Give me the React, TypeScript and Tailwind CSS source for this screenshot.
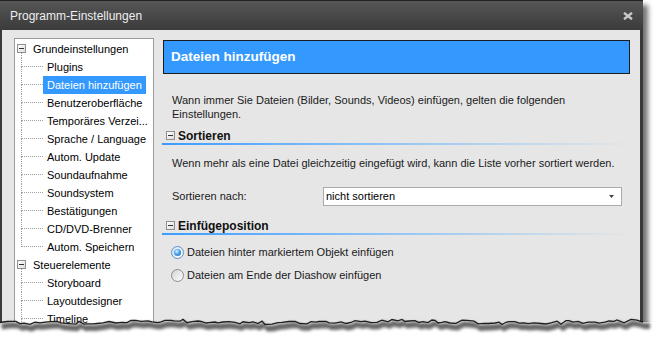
import React from 'react';

const groups = [
  {
    label: 'Grundeinstellungen',
    children: [
      'Plugins',
      'Dateien hinzufügen',
      'Benutzeroberfläche',
      'Temporäres Verzei...',
      'Sprache / Language',
      'Autom. Update',
      'Soundaufnahme',
      'Soundsystem',
      'Bestätigungen',
      'CD/DVD-Brenner',
      'Autom. Speichern',
    ],
    closed: true,
  },
  { label: 'Steuerelemente', children: ['Storyboard', 'Layoutdesigner', 'Timeline'], closed: false },
];

const Expander = () => (
  <span className="flex h-[9px] w-[9px] shrink-0 items-center justify-center border border-[#8e8f8f] bg-gradient-to-br from-white to-[#dcdcdc]">
    <span className="h-px w-[5px] bg-[#333]" />
  </span>
);

// fake paper tear along the bottom of the screenshot
const tear = (() => {
  let seed = 11;
  const rnd = () => {
    seed = (seed * 9301 + 49297) % 233280;
    return seed / 233280;
  };
  const pts: [number, number][] = [];
  let x = 0;
  while (x < 643) {
    const y = 12 + (rnd() - 0.5) * 3.6 + Math.sin(x / 37) * 1.1;
    pts.push([x, y]);
    x += 3 + Math.round(rnd() * 4);
  }
  pts.push([643, 12]);
  return pts;
})();

const tearLine = tear.map(([x, y]) => `${x},${y.toFixed(1)}`).join(' ');
const tearFill = `${tearLine} 660,12 660,40 0,40`;
const tearShadow =
  tear.map(([x, y]) => `${x + 1},${(y + 1).toFixed(1)}`).join(' ') +
  ' 650,13 650,19 ' +
  [...tear].reverse().map(([x, y]) => `${x + 2},${(y + 7).toFixed(1)}`).join(' ');

const Radio = ({ checked }: { checked?: boolean }) => (
  <svg width="13" height="13" viewBox="0 0 13 13" className="shrink-0">
    <defs>
      <linearGradient id={checked ? 'rb1' : 'rb0'} x1="0" y1="0" x2="1" y2="1">
        <stop offset="0" stopColor={checked ? '#cfe3f5' : '#d2d2d2'} />
        <stop offset="1" stopColor="#ffffff" />
      </linearGradient>
      <radialGradient id="rdot" cx="0.4" cy="0.35" r="0.75">
        <stop offset="0" stopColor="#e8f6ff" />
        <stop offset="0.45" stopColor="#58aef2" />
        <stop offset="1" stopColor="#1a64b8" />
      </radialGradient>
    </defs>
    <circle cx="6.5" cy="6.5" r="6" fill={`url(#${checked ? 'rb1' : 'rb0'})`} stroke={checked ? '#5f8fbf' : '#8c8c8c'} />
    {checked && <circle cx="6.5" cy="6.5" r="3.6" fill="url(#rdot)" />}
  </svg>
);

const SectionHead = ({ title }: { title: string }) => (
  <div>
    <div className="ml-[12px] flex h-[15px] items-center">
      <Expander />
      <span className="ml-[3px] text-[12px] font-bold text-[#111]">{title}</span>
    </div>
    <div className="ml-[8px] mr-[8px] h-[2px] bg-gradient-to-r from-[#3a9bff] via-[#94c6f4] to-transparent" />
  </div>
);

export default function App() {
  return (
    <div className="relative h-[345px] w-[660px] overflow-hidden bg-white font-['Liberation_Sans',Arial,sans-serif] text-[11px] text-[#1a1a1a]">
      <div className="flex h-[335px] w-[643px] flex-col shadow-[5px_5px_5px_rgba(0,0,0,0.55)]">
        {/* title bar */}
        <div className="flex h-[30px] shrink-0 items-center justify-between border-t border-[#222] bg-gradient-to-b from-[#565656] to-[#3b3b3b] pl-[10px] pr-[10px]">
          <span className="text-[12px] text-[#eeeeee]">Programm-Einstellungen</span>
          <svg width="10" height="8" viewBox="0 0 10 8" className="mr-[0px]">
            <path d="M1 0.8 L9 7.2 M9 0.8 L1 7.2" stroke="#c9c9c9" strokeWidth="2.4" />
          </svg>
        </div>

        <div className="flex flex-1 border-l-2 border-r-[3px] border-[#3a3a3a] bg-[#e6e6e6] pl-[12px] pt-[8px]">
          {/* tree */}
          <div className="w-[140px] shrink-0 border border-[#9a9a9a] bg-white pt-px">
            {groups.map((g) => (
              <div key={g.label}>
                <div className="flex h-[18px] pl-[2px]">
                  <div className="flex w-[9px] flex-col items-center">
                    <div className="h-[4px]" />
                    <Expander />
                    <div className="w-0 flex-1 border-l border-dotted border-[#9d9d9d]" />
                  </div>
                  <span className="ml-[7px] self-center text-black">{g.label}</span>
                </div>
                {g.children.map((c, i) => {
                  const last = g.closed && i === g.children.length - 1;
                  const sel = c === 'Dateien hinzufügen';
                  return (
                    <div key={c} className="flex h-[18px]">
                      <div className="ml-[6px] flex w-[22px] flex-col">
                        <div className="h-[9px] border-b border-l border-dotted border-[#9d9d9d]" />
                        <div className={`flex-1 ${last ? '' : 'border-l border-dotted border-[#9d9d9d]'}`} />
                      </div>
                      <span
                        className={`flex h-[18px] items-center whitespace-nowrap px-[4px] ${
                          sel ? 'bg-[#3399ff] text-white' : 'text-black'
                        }`}
                      >
                        {c}
                      </span>
                    </div>
                  );
                })}
              </div>
            ))}
          </div>

          {/* content */}
          <div className="flex-1 pt-[2px]">
            <div className="ml-[9px] mr-[10px] flex h-[34px] items-center border border-[#1c1c1c] bg-[#3399ff] pl-[7px]">
              <span className="text-[13.5px] font-bold text-white">Dateien hinzufügen</span>
            </div>

            <p className="ml-[18px] mt-[19px] leading-[14px]">
              Wann immer Sie Dateien (Bilder, Sounds, Videos) einfügen, gelten die folgenden
              <br />
              Einstellungen.
            </p>

            <div className="mt-[7px]">
              <SectionHead title="Sortieren" />
            </div>

            <p className="ml-[18px] mt-[11px] leading-[14px]">
              Wenn mehr als eine Datei gleichzeitig eingefügt wird, kann die Liste vorher sortiert werden.
            </p>

            <div className="ml-[18px] mt-[17px] flex h-[19px] items-center">
              <span className="w-[151px]">Sortieren nach:</span>
              <div className="flex h-[19px] w-[299px] items-center justify-between border border-[#ababab] bg-white pl-[2px] pr-[7px] text-black">
                <span>nicht sortieren</span>
                <svg width="5" height="3" viewBox="0 0 5 3">
                  <path d="M0 0 H5 L2.5 3 Z" fill="#444" />
                </svg>
              </div>
            </div>

            <div className="mt-[12px]">
              <SectionHead title="Einfügeposition" />
            </div>

            <div className="ml-[17px] mt-[9px] flex h-[16px] items-center gap-[3px]">
              <Radio checked />
              <span>Dateien hinter markiertem Objekt einfügen</span>
            </div>
            <div className="ml-[17px] mt-[7px] flex h-[16px] items-center gap-[3px]">
              <Radio />
              <span>Dateien am Ende der Diashow einfügen</span>
            </div>
          </div>
        </div>
      </div>

      {/* torn bottom edge */}
      <svg className="absolute left-0 top-[310px]" width="660" height="35" viewBox="0 0 660 35">
        <defs>
          <filter id="blur" x="-5%" y="-100%" width="110%" height="300%">
            <feGaussianBlur stdDeviation="1.6" />
          </filter>
        </defs>
        <polygon points={tearFill} fill="#ffffff" />
        <polygon points={tearShadow} fill="rgba(0,0,0,0.6)" filter="url(#blur)" />
        <polyline points={tearLine} fill="none" stroke="#1e1e1e" strokeWidth="1.3" />
      </svg>
    </div>
  );
}
